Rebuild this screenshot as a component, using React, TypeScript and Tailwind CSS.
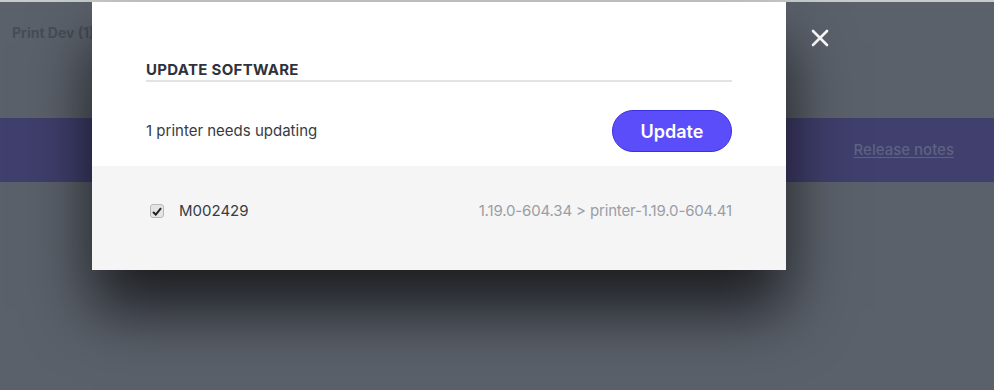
export default function App() {
  return (
    <div
      className="relative w-[994px] h-[390px] overflow-hidden bg-[#5b616b]"
      style={{ fontFamily: "Inter, 'Noto Sans', sans-serif" }}
    >
      {/* page behind the overlay */}
      <div className="h-[2px] bg-[#c9cacc]" />
      <div className="flex flex-col">
        <div className="h-[116px] px-3 pt-[18px]">
          <span className="text-[14px] font-bold text-[#474c55]">Print Dev (1)</span>
        </div>
        <div className="h-[64px] bg-[#403f6d] flex items-center justify-end pr-[40px]">
          <span className="text-[15px] font-medium text-[#5e6284] underline underline-offset-2">Release notes</span>
        </div>
      </div>

      {/* close */}
      <button className="absolute left-[811px] top-[29px] text-white">
        <svg width="18" height="18" viewBox="0 0 18 18" fill="none">
          <path d="M2 2L16 16M16 2L2 16" stroke="white" strokeWidth="2.6" strokeLinecap="round" />
        </svg>
      </button>

      {/* modal */}
      <div className="absolute left-[92px] top-[2px] w-[694px] bg-white shadow-[0_40px_60px_0_rgba(0,0,0,0.7)]">
        <div className="px-[54px] pt-[60px]">
          <h2 className="text-[15px] leading-[16px] font-bold tracking-[0.02em] text-[#2f323a] pb-[2px] border-b-2 border-[#e3e3e3]">
            UPDATE SOFTWARE
          </h2>
          <div className="flex items-center justify-between h-[84px] pt-[14px]">
            <span className="text-[15px] text-[#383b43]">1 printer needs updating</span>
            <button className="w-[120px] h-[42px] rounded-full bg-[#5b4efa] border border-[#3b31e0] text-white text-[18px] font-semibold">
              Update
            </button>
          </div>
        </div>
        <div className="bg-[#f5f5f5] h-[104px] px-[54px] pt-[34px]">
          <div className="flex items-center justify-between">
            <label className="flex items-center gap-[15px] pl-[4px]">
              <span className="w-[14px] h-[14px] rounded-[3px] bg-[#e4e4e6] border border-[#b9b9bd] flex items-center justify-center">
                <svg width="10" height="9" viewBox="0 0 10 9">
                  <path d="M1 5L3.8 7.6L9 1.2" stroke="#222" strokeWidth="2" fill="none" />
                </svg>
              </span>
              <span className="text-[15px] text-[#383b43]">M002429</span>
            </label>
            <span className="text-[15px] tracking-[-0.01em] text-[#9a9ea6]">1.19.0-604.34 &gt; printer-1.19.0-604.41</span>
          </div>
        </div>
      </div>
    </div>
  );
}
